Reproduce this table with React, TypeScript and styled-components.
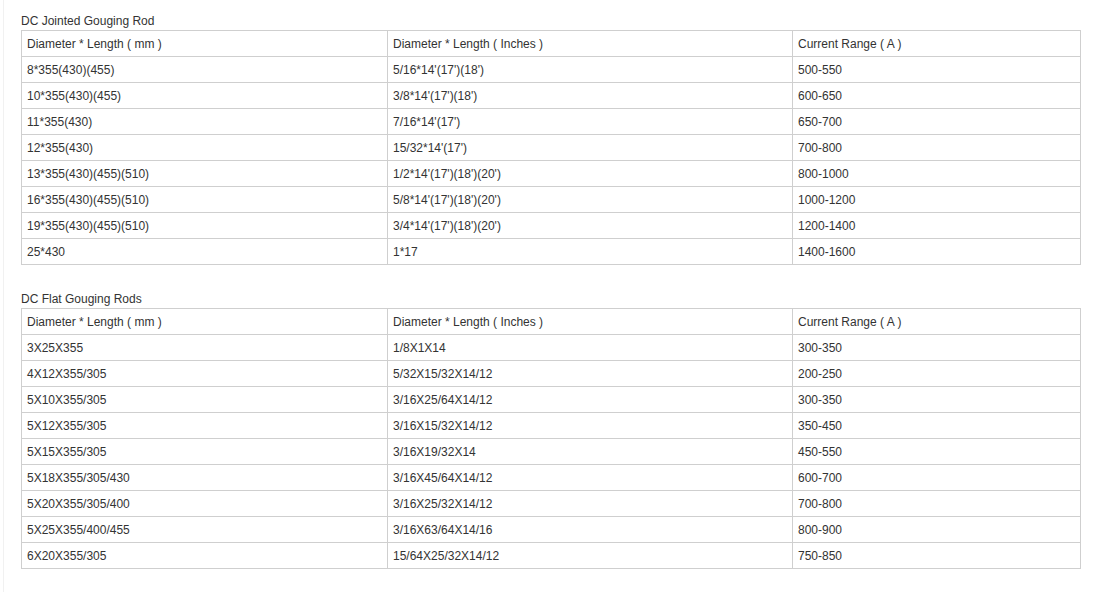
import React from "react";
import styled, { createGlobalStyle } from "styled-components";

const Global = createGlobalStyle`
  html, body { margin: 0; padding: 0; background: #fff; }
  body { font-family: "Liberation Sans", Arial, sans-serif; }
`;

const Page = styled.div`
  margin-left: 3px;
  border-left: 1px solid #f1f1f1;
  padding: 12px 0 0 17px;
  width: 1060px;
  min-height: 580px;
`;

const Section = styled.section<{ $gap: number }>`
  margin-bottom: ${(p) => p.$gap}px;
`;

const Title = styled.div`
  font-size: 12px;
  line-height: 18px;
  color: #333;
`;

const Table = styled.table`
  border-collapse: collapse;
  table-layout: fixed;
  width: 1059px;
  font-size: 12px;
  color: #333;
`;

const Cell = styled.td`
  border: 1px solid #cfcfcf;
  height: 26px;
  padding: 0 5px;
  line-height: 14px;
  box-sizing: border-box;
  vertical-align: middle;
  white-space: nowrap;
`;

const widths = [366, 405, 288];

type Data = { title: string; rows: string[][] };

const header = ["Diameter * Length ( mm )", "Diameter * Length ( Inches )", "Current Range ( A )"];

const tables: Data[] = [
  {
    title: "DC Jointed Gouging Rod",
    rows: [
      header,
      ["8*355(430)(455)", "5/16*14'(17')(18')", "500-550"],
      ["10*355(430)(455)", "3/8*14'(17')(18')", "600-650"],
      ["11*355(430)", "7/16*14'(17')", "650-700"],
      ["12*355(430)", "15/32*14'(17')", "700-800"],
      ["13*355(430)(455)(510)", "1/2*14'(17')(18')(20')", "800-1000"],
      ["16*355(430)(455)(510)", "5/8*14'(17')(18')(20')", "1000-1200"],
      ["19*355(430)(455)(510)", "3/4*14'(17')(18')(20')", "1200-1400"],
      ["25*430", "1*17", "1400-1600"],
    ],
  },
  {
    title: "DC Flat Gouging Rods",
    rows: [
      header,
      ["3X25X355", "1/8X1X14", "300-350"],
      ["4X12X355/305", "5/32X15/32X14/12", "200-250"],
      ["5X10X355/305", "3/16X25/64X14/12", "300-350"],
      ["5X12X355/305", "3/16X15/32X14/12", "350-450"],
      ["5X15X355/305", "3/16X19/32X14", "450-550"],
      ["5X18X355/305/430", "3/16X45/64X14/12", "600-700"],
      ["5X20X355/305/400", "3/16X25/32X14/12", "700-800"],
      ["5X25X355/400/455", "3/16X63/64X14/16", "800-900"],
      ["6X20X355/305", "15/64X25/32X14/12", "750-850"],
    ],
  },
];

export default function App() {
  return (
    <>
      <Global />
      <Page>
        {tables.map((t, i) => (
          <Section key={t.title} $gap={i === 0 ? 25 : 0}>
            <Title>{t.title}</Title>
            <Table>
              <colgroup>
                {widths.map((w, j) => (
                  <col key={j} style={{ width: w }} />
                ))}
              </colgroup>
              <tbody>
                {t.rows.map((r, k) => (
                  <tr key={k}>
                    {r.map((c, j) => (
                      <Cell key={j}>{c}</Cell>
                    ))}
                  </tr>
                ))}
              </tbody>
            </Table>
          </Section>
        ))}
      </Page>
    </>
  );
}
